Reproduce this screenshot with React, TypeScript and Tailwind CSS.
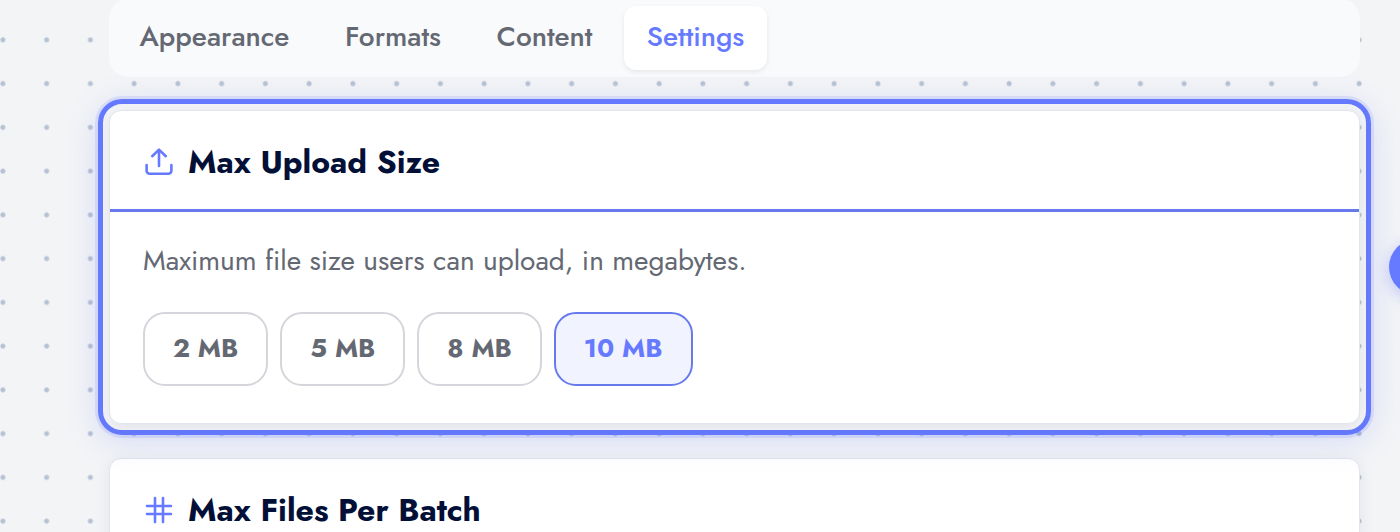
import { useState } from "react";
import type { ReactNode } from "react";

const tabs = [
    { name: "Appearance", width: "w-[197px]" },
    { name: "Formats", width: "w-[144px]" },
    { name: "Content", width: "w-[143px]" },
    { name: "Settings", width: "w-[143px]" },
];

const sizes = [2, 5, 8, 10];

function UploadIcon() {
    return (
        <svg width="30" height="30" viewBox="0 0 30 30" fill="none" stroke="currentColor" strokeWidth="2.6" strokeLinecap="round" strokeLinejoin="round" aria-hidden="true">
            <path d="M15 19V3M8.2 9.2 15 2.6l6.8 6.6" />
            <path d="M2.6 18v5.8a3 3 0 0 0 3 3h18.8a3 3 0 0 0 3-3V18" />
        </svg>
    );
}

function HashIcon() {
    return (
        <svg width="30" height="30" viewBox="0 0 30 30" fill="none" stroke="currentColor" strokeWidth="2.6" strokeLinecap="round" aria-hidden="true">
            <path d="M3 11h24M3 19h24M11 3v24M19 3v24" />
        </svg>
    );
}

function SettingCard({ icon, title, children }: {
    icon: ReactNode,
    title: string,
    children?: ReactNode,
}) {
    return (
        <section className="overflow-hidden rounded-xl border border-[#e1e5ee] bg-white shadow-[0_4px_16px_rgba(30,41,90,0.08)]">
            <header className="flex h-[101px] items-center gap-[14px] border-b-3 border-[#667aed] px-[34px] pt-[3px] text-[#667aff]">
                {icon}
                <h2 className="text-[32px] leading-10 font-bold text-[#020f36]">{title}</h2>
            </header>
            {children}
        </section>
    );
}

export default function App() {
    const [tab, setTab] = useState("Settings");
    const [size, setSize] = useState(10);

    return (
        <main className="h-screen overflow-hidden bg-[#f3f4f6] bg-[radial-gradient(circle,#b6c2d3_2px,transparent_3px)] bg-[length:3.125vw_3.125vw] bg-[position:-19px_18px] pr-10 pl-[109px] font-['Jost','Lato',sans-serif]">
            <nav className="-mt-px flex gap-2 rounded-[20px] bg-[#f9fafc] p-[7px]">
                {tabs.map(({ name, width }) => (
                    <button
                        key={name}
                        type="button"
                        onClick={() => setTab(name)}
                        className={`h-16 rounded-xl pb-0.5 text-[28px] font-medium ${width} ${tab === name ? "bg-white text-[#667aff] shadow-[0_2px_5px_rgba(0,0,0,0.08)]" : "text-[#646873]"}`}
                    >
                        {name}
                    </button>
                ))}
            </nav>

            <div className="relative -mx-[11px] mt-[22px] rounded-[24px] border-5 border-[#667aff] p-[6px] shadow-[0_0_0_3px_rgba(102,122,255,0.15),0_6px_32px_rgba(102,122,255,0.2)]">
                <SettingCard icon={<UploadIcon />} title="Max Upload Size">
                    <div className="px-[33px] pt-7 pb-[37px]">
                        <p className="text-[28px] leading-[42px] text-[#646873]">
                            Maximum file size users can upload, in megabytes.
                        </p>
                        <div className="mt-[30px] flex gap-3">
                            {sizes.map((mb) => (
                                <button
                                    key={mb}
                                    type="button"
                                    aria-pressed={size === mb}
                                    onClick={() => setSize(mb)}
                                    className={`h-[74px] rounded-[22px] border-2 px-7 pb-0.5 text-[26px] font-bold ${size === mb ? "border-[#667aed] bg-[#f1f3ff] text-[#667aff]" : "border-[#d4d6dc] bg-white text-[#646873]"}`}
                                >
                                    {mb} MB
                                </button>
                            ))}
                        </div>
                    </div>
                </SettingCard>
                <button
                    type="button"
                    aria-label="Next"
                    className="absolute top-1/2 left-full ml-[23px] size-14 -translate-y-1/2 rounded-full bg-[#667aff] shadow-[0_4px_16px_rgba(102,122,255,0.4)]"
                />
            </div>

            <div className="mt-[23px]">
                <SettingCard icon={<HashIcon />} title="Max Files Per Batch" />
            </div>
        </main>
    );
}
